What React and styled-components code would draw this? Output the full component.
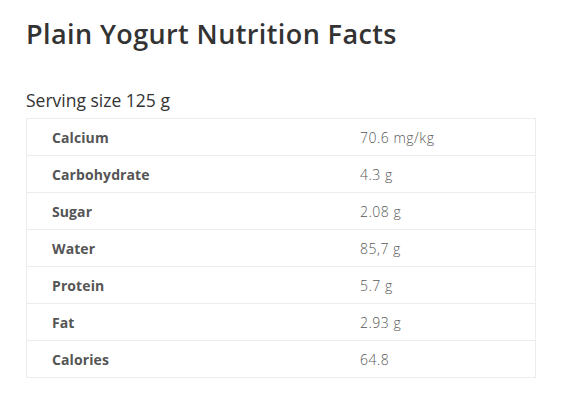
import React from "react";
import styled, { createGlobalStyle } from "styled-components";

const GlobalStyle = createGlobalStyle`
  body {
    margin: 0;
    background: #ffffff;
    font-family: "Open Sans", "DejaVu Sans", sans-serif;
  }
`;

const Page = styled.div`
  padding: 17px 26px 0 26px;
  width: 510px;
`;

const Title = styled.h1`
  margin: 0;
  font-size: 27px;
  font-weight: 600;
  color: #333333;
  letter-spacing: 0.4px;
  line-height: 34px;
`;

const Serving = styled.h2`
  margin: 37px 0 0 0;
  font-size: 17.5px;
  font-weight: 400;
  color: #333333;
  line-height: 24px;
`;

const Table = styled.table`
  margin-top: 6px;
  width: 510px;
  border-collapse: collapse;
  border: 1px solid #ececec;
`;

const Row = styled.tr`
  height: 37px;
  border-bottom: 1px solid #ececec;
`;

const Cell = styled.td`
  padding: 0 0 0 ${(p) => (p.$label ? "25px" : "0")};
  width: ${(p) => (p.$label ? "308px" : "auto")};
  font-size: 14px;
  font-weight: ${(p) => (p.$label ? 700 : 300)};
  letter-spacing: ${(p) => (p.$label ? "0.1px" : "0.5px")};
  color: ${(p) => (p.$label ? "#555555" : "#585858")};
  vertical-align: middle;
`;

const rows = [
  ["Calcium", "70.6 mg/kg"],
  ["Carbohydrate", "4.3 g"],
  ["Sugar", "2.08 g"],
  ["Water", "85,7 g"],
  ["Protein", "5.7 g"],
  ["Fat", "2.93 g"],
  ["Calories", "64.8"],
];

export default function App() {
  return (
    <>
      <GlobalStyle />
      <Page>
        <Title>Plain Yogurt Nutrition Facts</Title>
        <Serving>Serving size 125 g</Serving>
        <Table>
          <tbody>
            {rows.map(([name, value]) => (
              <Row key={name}>
                <Cell $label>{name}</Cell>
                <Cell>{value}</Cell>
              </Row>
            ))}
          </tbody>
        </Table>
      </Page>
    </>
  );
}
